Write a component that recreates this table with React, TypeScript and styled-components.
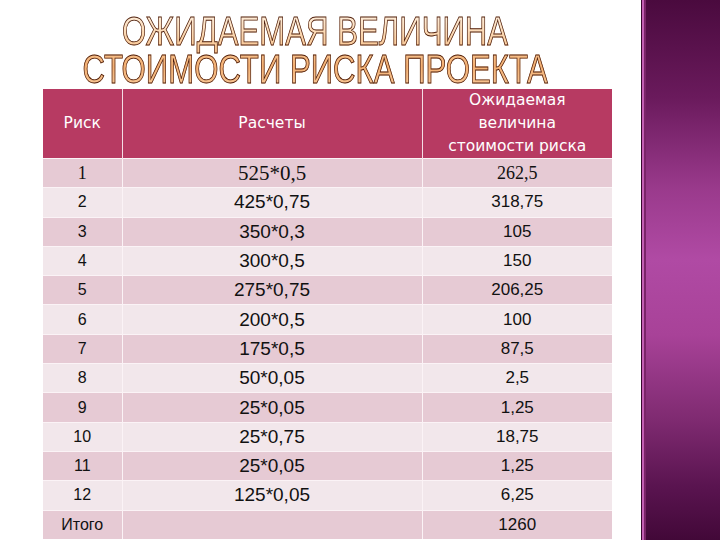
import React from "react";
import styled, { createGlobalStyle } from "styled-components";

const Global = createGlobalStyle`
  html, body { margin: 0; padding: 0; background: #fff; }
  body { width: 720px; height: 540px; overflow: hidden; }
`;

const Page = styled.div`
  display: flex;
  width: 720px;
  height: 540px;
  overflow: hidden;
`;

const Main = styled.div`
  flex: 1;
  display: flex;
  flex-direction: column;
`;

const Strip = styled.div`
  width: 78px;
  border-left: 1px solid #3a0630;
  box-shadow: inset 2px 0 0 #c25fb3, inset 4px 0 0 #7a2468;
  background: linear-gradient(
    180deg,
    #4a0a3e 0%,
    #6a1a5c 18%,
    #9a3a8c 35%,
    #b04aa4 48%,
    #a84298 62%,
    #7e2a70 78%,
    #5a1450 90%,
    #420838 100%
  );
`;

const TitleBox = styled.div`
  width: 630px;
  height: 89px;
  padding-top: 12px;
  box-sizing: border-box;
  display: flex;
  justify-content: center;
`;

const Title = styled.h1`
  margin: 0;
  font-family: "Liberation Sans", Arial, sans-serif;
  font-weight: 400;
  font-size: 41px;
  line-height: 38px;
  text-align: center;
  white-space: nowrap;
  transform: scaleX(0.76);
  transform-origin: center top;
  color: #f8c898;
  background: linear-gradient(180deg, #fff1e0 0%, #fbd2a6 35%, #f4b072 70%, #f8c898 100%);
  -webkit-background-clip: text;
  background-clip: text;
  -webkit-text-fill-color: transparent;
  -webkit-text-stroke: 0.9px #4a1c0c;
`;

const Table = styled.table`
  margin-left: 43px;
  width: 569px;
  border-collapse: collapse;
  table-layout: fixed;
`;

const Col = styled.col<{ $w: number }>`
  width: ${(p) => p.$w}px;
`;

const HeadCell = styled.th`
  height: 69px;
  padding: 0;
  background: #b73a62;
  color: #fff;
  font-family: "DejaVu Sans", sans-serif;
  font-weight: 400;
  font-size: 15.5px;
  line-height: 23px;
  text-align: center;
  vertical-align: middle;
  border-right: 1px solid #f4dde5;
  &:last-child { border-right: none; }
`;

const Row = styled.tr<{ $dark: boolean }>`
  height: 29.3px;
  background: ${(p) => (p.$dark ? "#e6cad4" : "#f2e7eb")};
`;

const Cell = styled.td<{ $size: number; $serif?: boolean }>`
  padding: 0;
  text-align: center;
  vertical-align: middle;
  color: #111;
  font-family: ${(p) =>
    p.$serif ? '"Liberation Serif", "Times New Roman", serif' : '"Liberation Sans", Arial, sans-serif'};
  font-size: ${(p) => p.$size}px;
  line-height: 20px;
  border-top: 1px solid #fbf3f6;
  border-right: 1px solid #fbf3f6;
  &:last-child { border-right: none; }
`;

const rows: [string, string, string][] = [
  ["1", "525*0,5", "262,5"],
  ["2", "425*0,75", "318,75"],
  ["3", "350*0,3", "105"],
  ["4", "300*0,5", "150"],
  ["5", "275*0,75", "206,25"],
  ["6", "200*0,5", "100"],
  ["7", "175*0,5", "87,5"],
  ["8", "50*0,05", "2,5"],
  ["9", "25*0,05", "1,25"],
  ["10", "25*0,75", "18,75"],
  ["11", "25*0,05", "1,25"],
  ["12", "125*0,05", "6,25"],
  ["Итого", "", "1260"],
];

export default function App() {
  return (
    <Page>
      <Global />
      <Main>
        <TitleBox>
          <Title>
            ОЖИДАЕМАЯ ВЕЛИЧИНА
            <br />
            СТОИМОСТИ РИСКА ПРОЕКТА
          </Title>
        </TitleBox>
        <Table>
          <colgroup>
            <Col $w={79} />
            <Col $w={300} />
            <Col $w={190} />
          </colgroup>
          <thead>
            <tr>
              <HeadCell>Риск</HeadCell>
              <HeadCell>Расчеты</HeadCell>
              <HeadCell>
                Ожидаемая
                <br />
                величина
                <br />
                стоимости риска
              </HeadCell>
            </tr>
          </thead>
          <tbody>
            {rows.map((r, i) => {
              const serif = i === 0;
              return (
                <Row key={i} $dark={i % 2 === 0}>
                  <Cell $size={serif ? 18 : 16} $serif={serif}>{r[0]}</Cell>
                  <Cell $size={serif ? 21 : 19} $serif={serif}>{r[1]}</Cell>
                  <Cell $size={serif ? 18 : 17} $serif={serif}>{r[2]}</Cell>
                </Row>
              );
            })}
          </tbody>
        </Table>
      </Main>
      <Strip />
    </Page>
  );
}
